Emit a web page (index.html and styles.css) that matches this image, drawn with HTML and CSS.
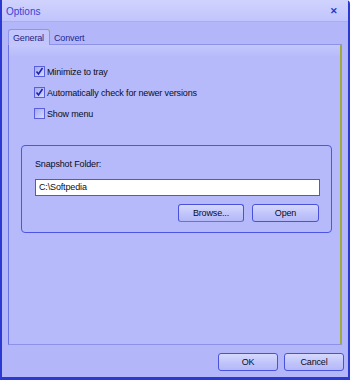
FILE: index.html
```html
<!DOCTYPE html>
<html>
<head>
<meta name="viewport" content="width=device-width, initial-scale=1">
<title>Options</title>
<link rel="stylesheet" href="styles.css">
</head>
<body>
<div class="window">
  <div class="titlebar">
    <span class="title">Options</span>
    <span class="close">&#x2715;</span>
  </div>
  <div class="content">
    <div class="tabs">
      <div class="tab active">General</div>
      <div class="tab">Convert</div>
    </div>
    <div class="panel">
      <div class="checks">
        <label class="check"><span class="box checked"><svg width="9" height="9" viewBox="0 0 9 9"><path d="M1.5 4.5 L3.5 7 L7.5 1" fill="none" stroke="#1c22b8" stroke-width="1.6"/></svg></span>Minimize to tray</label>
        <label class="check"><span class="box checked"><svg width="9" height="9" viewBox="0 0 9 9"><path d="M1.5 4.5 L3.5 7 L7.5 1" fill="none" stroke="#1c22b8" stroke-width="1.6"/></svg></span>Automatically check for newer versions</label>
        <label class="check"><span class="box"></span>Show menu</label>
      </div>
      <div class="group">
        <div class="group-label">Snapshot Folder:</div>
        <div class="field">C:\Softpedia</div>
        <div class="group-buttons">
          <div class="btn browse">Browse...</div>
          <div class="btn open">Open</div>
        </div>
      </div>
    </div>
    <div class="footer">
      <div class="btn">OK</div>
      <div class="btn">Cancel</div>
    </div>
  </div>
</div>
</body>
</html>
```

FILE: styles.css
```css
* {
  box-sizing: border-box;
}

body {
  margin: 0;
  font-family: "Liberation Sans", Arial, sans-serif;
  font-size: 9px;
  letter-spacing: -0.15px;
  color: #0c0c20;
}

.window {
  width: 350px;
  height: 380px;
  background: #b3b7fa;
  border-left: 2px solid #2a38d4;
  border-right: 2px solid #2a38d4;
  border-bottom: 3px solid #2a38d4;
  border-top-right-radius: 4px;
}

.titlebar {
  height: 22px;
  display: flex;
  align-items: center;
  justify-content: space-between;
  padding: 1px 10px 0 4px;
  background: linear-gradient(#d0d3fd, #c0c4fc);
  border-bottom: 1px solid #a8adf4;
}

.title {
  font-size: 10px;
  letter-spacing: 0;
  color: #3a42d6;
}

.close {
  font-size: 9px;
  font-weight: bold;
  color: #2a35d0;
  letter-spacing: 0;
}

.content {
  padding: 7px 0 0 6px;
}

.tabs {
  display: flex;
  align-items: flex-end;
  height: 16px;
  margin-bottom: -1px;
  position: relative;
}

.tab {
  height: 13px;
  padding: 1px 4px 0 4px;
  color: #1e2690;
}

.tab.active {
  height: 16px;
  width: 42px;
  padding: 3px 0 0 4px;
  color: #1c2488;
  background: #c2c6fc;
  border: 1px solid #8e94ec;
  border-right: 1px solid #a2a838;
  border-bottom: none;
  border-radius: 3px 3px 0 0;
}

.panel {
  width: 334px;
  height: 301px;
  border: 1px solid #8c92ea;
  border-left-color: #6a72e6;
  border-right: 2px solid #a0aa3a;
  background: linear-gradient(#c4c8fc, #b6bafa 12px, #b6bafa);
  padding: 20px 0 0 12px;
}

.checks {
  padding-left: 13px;
  display: flex;
  flex-direction: column;
  gap: 8px;
}

.check {
  display: flex;
  align-items: center;
  height: 13px;
}

.box {
  width: 11px;
  height: 11px;
  margin-right: 2px;
  border: 1px solid #5a60dc;
  background: linear-gradient(135deg, #a6abf0, #d6d9fd);
  display: flex;
  align-items: center;
  justify-content: center;
}

.group {
  margin-top: 25px;
  width: 311px;
  height: 88px;
  border: 1px solid #4c55e4;
  border-radius: 4px;
  padding: 13px 12px 0 13px;
}

.group-label {
  height: 13px;
}

.field {
  margin-top: 7px;
  height: 17px;
  width: 285px;
  background: #fff;
  border: 1px solid #4c55e4;
  padding: 2px 3px;
}

.group-buttons {
  display: flex;
  justify-content: flex-end;
  gap: 8px;
  margin-top: 8px;
}

.btn {
  height: 18px;
  width: 60px;
  display: flex;
  align-items: center;
  justify-content: center;
  border: 1px solid #4a52dc;
  border-radius: 3px;
  background: linear-gradient(#d6d9fd, #c2c6fb 50%, #b4b8f8);
  color: #0c0c20;
}

.browse {
  width: 66px;
  border-bottom-color: #6a8a50;
}

.open {
  width: 67px;
}

.footer {
  display: flex;
  justify-content: flex-end;
  gap: 6px;
  padding: 8px 0 0 0;
  width: 336px;
}
```
